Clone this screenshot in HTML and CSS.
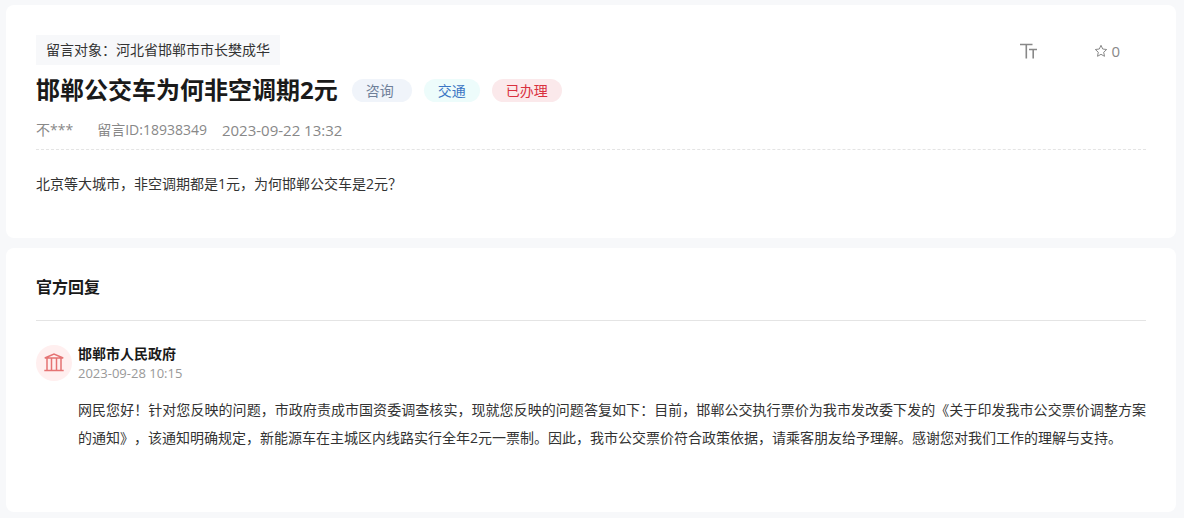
FILE: index.html
```html
<!DOCTYPE html>
<html lang="zh-CN">
<head>
<meta charset="utf-8">
<meta name="viewport" content="width=device-width, initial-scale=1">
<title>邯郸公交车为何非空调期2元</title>
<link rel="stylesheet" href="styles.css">
</head>
<body>
<main class="page">
  <article class="card message">
    <header class="message-top">
      <p class="target">留言对象：河北省邯郸市市长樊成华</p>
      <div class="tools">
        <button class="tool" type="button" aria-label="字号">
          <svg class="icon-size" viewBox="0 0 18 16" aria-hidden="true"><path d="M0 1.500h12.500M6.300 1.500V15.500M9 6.500h8M13.200 6.500V15.500"/></svg>
        </button>
        <button class="tool" type="button" aria-label="收藏 0">
          <svg class="icon-star" viewBox="0 0 14 14" aria-hidden="true"><path d="M7 1.300l1.700 3.700 4 .5-3 2.700.8 4.100L7 10.300l-3.500 2 .8-4.100-3-2.700 4-.5z"/></svg>
          <span class="count">0</span>
        </button>
      </div>
    </header>
    <div class="heading">
      <h1 class="title">邯郸公交车为何非空调期2元</h1>
      <ul class="tags">
        <li class="tag tag-ask">咨询</li>
        <li class="tag tag-topic">交通</li>
        <li class="tag tag-done">已办理</li>
      </ul>
    </div>
    <div class="meta">
      <span class="author">不***</span>
      <span>留言ID:18938349</span>
      <time class="date" datetime="2023-09-22T13:32">2023-09-22 13:32</time>
    </div>
    <p class="content">北京等大城市，非空调期都是1元，为何邯郸公交车是2元？</p>
  </article>

  <section class="card replies">
    <h2 class="section-title">官方回复</h2>
    <article class="reply">
      <div class="avatar">
        <svg class="icon-hall" viewBox="0 0 20 20" aria-hidden="true"><path d="M.8 5L10 1l9.200 4zM3 5V17.500M7.500 5V17.500M12.500 5V17.500M17 5V17.500M.3 17.500h19.400"/></svg>
      </div>
      <div class="reply-body">
        <h3 class="reply-name">邯郸市人民政府</h3>
        <time class="reply-date" datetime="2023-09-28T10:15">2023-09-28 10:15</time>
        <p class="reply-text">网民您好！针对您反映的问题，市政府责成市国资委调查核实，现就您反映的问题答复如下：目前，邯郸公交执行票价为我市发改委下发的《关于印发我市公交票价调整方案的通知》，该通知明确规定，新能源车在主城区内线路实行全年2元一票制。因此，我市公交票价符合政策依据，请乘客朋友给予理解。感谢您对我们工作的理解与支持。</p>
      </div>
    </article>
  </section>
</main>
</body>
</html>
```
FILE: styles.css
```css
* {
  box-sizing: border-box;
}

body {
  margin: 0;
  background: #f7f8fa;
  color: #333;
  font: 14px/28px "Open Sans", "Noto Sans CJK SC", sans-serif;
  text-spacing-trim: space-all;
}

h1, h2, h3, p, ul {
  margin: 0;
  padding: 0;
}

.page {
  display: grid;
  gap: 10px;
  padding: 5px 8px 6px 6px;
}

.card {
  padding: 30px;
  border-radius: 8px;
  background: #fff;
}

.message {
  padding-bottom: 40px;
}

.message-top {
  display: flex;
  justify-content: space-between;
  align-items: center;
}

.target {
  padding: 0 10px;
  background: #f7f8fa;
  line-height: 30px;
}

.tools {
  display: flex;
  gap: 56px;
  padding-right: 26px;
}

.tool {
  display: flex;
  align-items: center;
  gap: 3px;
  padding: 2px 0 0;
  border: 0;
  background: none;
  color: #888;
  font: inherit;
  cursor: pointer;
}

.tool svg,
.icon-hall {
  fill: none;
  stroke: currentColor;
}

.tool .icon-size {
  width: 18px;
  height: 16px;
  stroke-width: 1.6;
}

.icon-star {
  width: 14px;
  height: 14px;
}

.count {
  font-size: 15px;
}

.heading {
  display: flex;
  align-items: center;
  gap: 14px;
  padding-top: 7px;
}

.title {
  color: #1a1a1a;
  font-size: 24px;
  font-weight: 700;
  line-height: 36px;
}

.tags {
  display: flex;
  gap: 12px;
  list-style: none;
}

.tag {
  padding: 0 14px;
  border-radius: 12px;
  line-height: 23px;
}

.tag-ask {
  padding-right: 18px;
  background: #f0f4fa;
  color: #6f7f99;
}

.tag-topic {
  background: #edfcfb;
  color: #3b76c4;
}

.tag-done {
  background: #fbe9eb;
  color: #d9303e;
}

.meta {
  display: flex;
  align-items: center;
  padding: 8px 0 5px;
  border-bottom: 1px dashed #e4e4e4;
  color: #888;
}

.author {
  margin-right: 24px;
}

.date {
  margin-left: 15px;
  font-size: 15px;
}

.content {
  padding-top: 20px;
}

.replies {
  padding-top: 23px;
  padding-bottom: 60px;
}

.section-title {
  padding-bottom: 17px;
  border-bottom: 1px solid #e4e4e4;
  color: #1a1a1a;
  font-size: 16px;
  font-weight: 700;
  line-height: 32px;
}

.reply {
  display: flex;
  gap: 6px;
  padding-top: 24px;
}

.avatar {
  display: grid;
  flex: none;
  place-items: center;
  width: 36px;
  height: 36px;
  border-radius: 50%;
  background: #ffefef;
  color: #e57373;
}

.icon-hall {
  width: 20px;
  height: 20px;
  stroke-width: 1.5;
}

.reply-name {
  color: #1a1a1a;
  font-size: 14px;
  font-weight: 700;
  line-height: 18px;
}

.reply-date {
  display: block;
  color: #999;
  font-size: 13px;
  line-height: 20px;
}

.reply-text {
  padding-top: 13px;
  text-align: justify;
}
```
